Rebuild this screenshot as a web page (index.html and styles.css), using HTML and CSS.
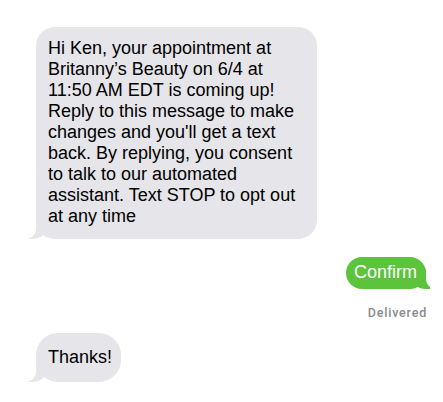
FILE: index.html
```html
<!DOCTYPE html>
<html lang="en">
<head>
<meta charset="utf-8">
<title>Messages</title>
<link rel="stylesheet" href="styles.css">
</head>
<body>
<div class="thread">
  <div class="bubble in big">Hi Ken, your appointment at Britanny’s Beauty on 6/4 at 11:50 AM EDT is coming up! Reply to this message to make changes and you'll get a text back. By replying, you consent to talk to our automated assistant. Text STOP to opt out at any time</div>
  <div class="bubble out confirm">Confirm</div>
  <div class="status">Delivered</div>
  <div class="bubble in thanks">Thanks!</div>
</div>
</body>
</html>
```
FILE: styles.css
```css
html, body {
  margin: 0;
  padding: 0;
  background: #ffffff;
}

.thread {
  display: flex;
  flex-direction: column;
  align-items: flex-start;
  padding: 27px 17px 0 36px;
  font-family: "Liberation Sans", Arial, sans-serif;
  font-size: 18px;
  line-height: 21px;
  color: #000000;
}

.bubble {
  position: relative;
  z-index: 0;
  box-sizing: border-box;
  border-radius: 19px;
}

.in {
  background: #e5e5ea;
}

.out {
  background: #5bc33c;
  color: #ffffff;
  align-self: flex-end;
}

.in::before,
.out::before {
  content: "";
  position: absolute;
  z-index: -1;
  bottom: 0;
  width: 20px;
  height: 20px;
}

.in::after,
.out::after {
  content: "";
  position: absolute;
  z-index: -1;
  bottom: 0;
  width: 26px;
  height: 20px;
  background: #ffffff;
}

.in::before {
  left: -8px;
  background: #e5e5ea;
  border-bottom-right-radius: 16px 14px;
}

.in::after {
  left: -26px;
  border-bottom-right-radius: 10px;
}

.out::before {
  right: -4px;
  background: #5bc33c;
  border-bottom-left-radius: 16px 14px;
}

.out::after {
  right: -26px;
  border-bottom-left-radius: 10px;
}

.big {
  width: 281px;
  padding: 11px 12px 12px 12px;
}

.confirm {
  margin-top: 18px;
  padding: 5px 9px 6px 8px;
  border-radius: 17px;
}

.status {
  align-self: flex-end;
  margin-top: 17px;
  font-family: Roboto, "Liberation Sans", sans-serif;
  font-size: 12.5px;
  line-height: 14px;
  font-weight: 500;
  letter-spacing: 0.8px;
  color: #8a8a8f;
  margin-right: -1px;
}

.thanks {
  margin-top: 13px;
  padding: 14px 9px 14px 12px;
  border-radius: 22px;
}
```
